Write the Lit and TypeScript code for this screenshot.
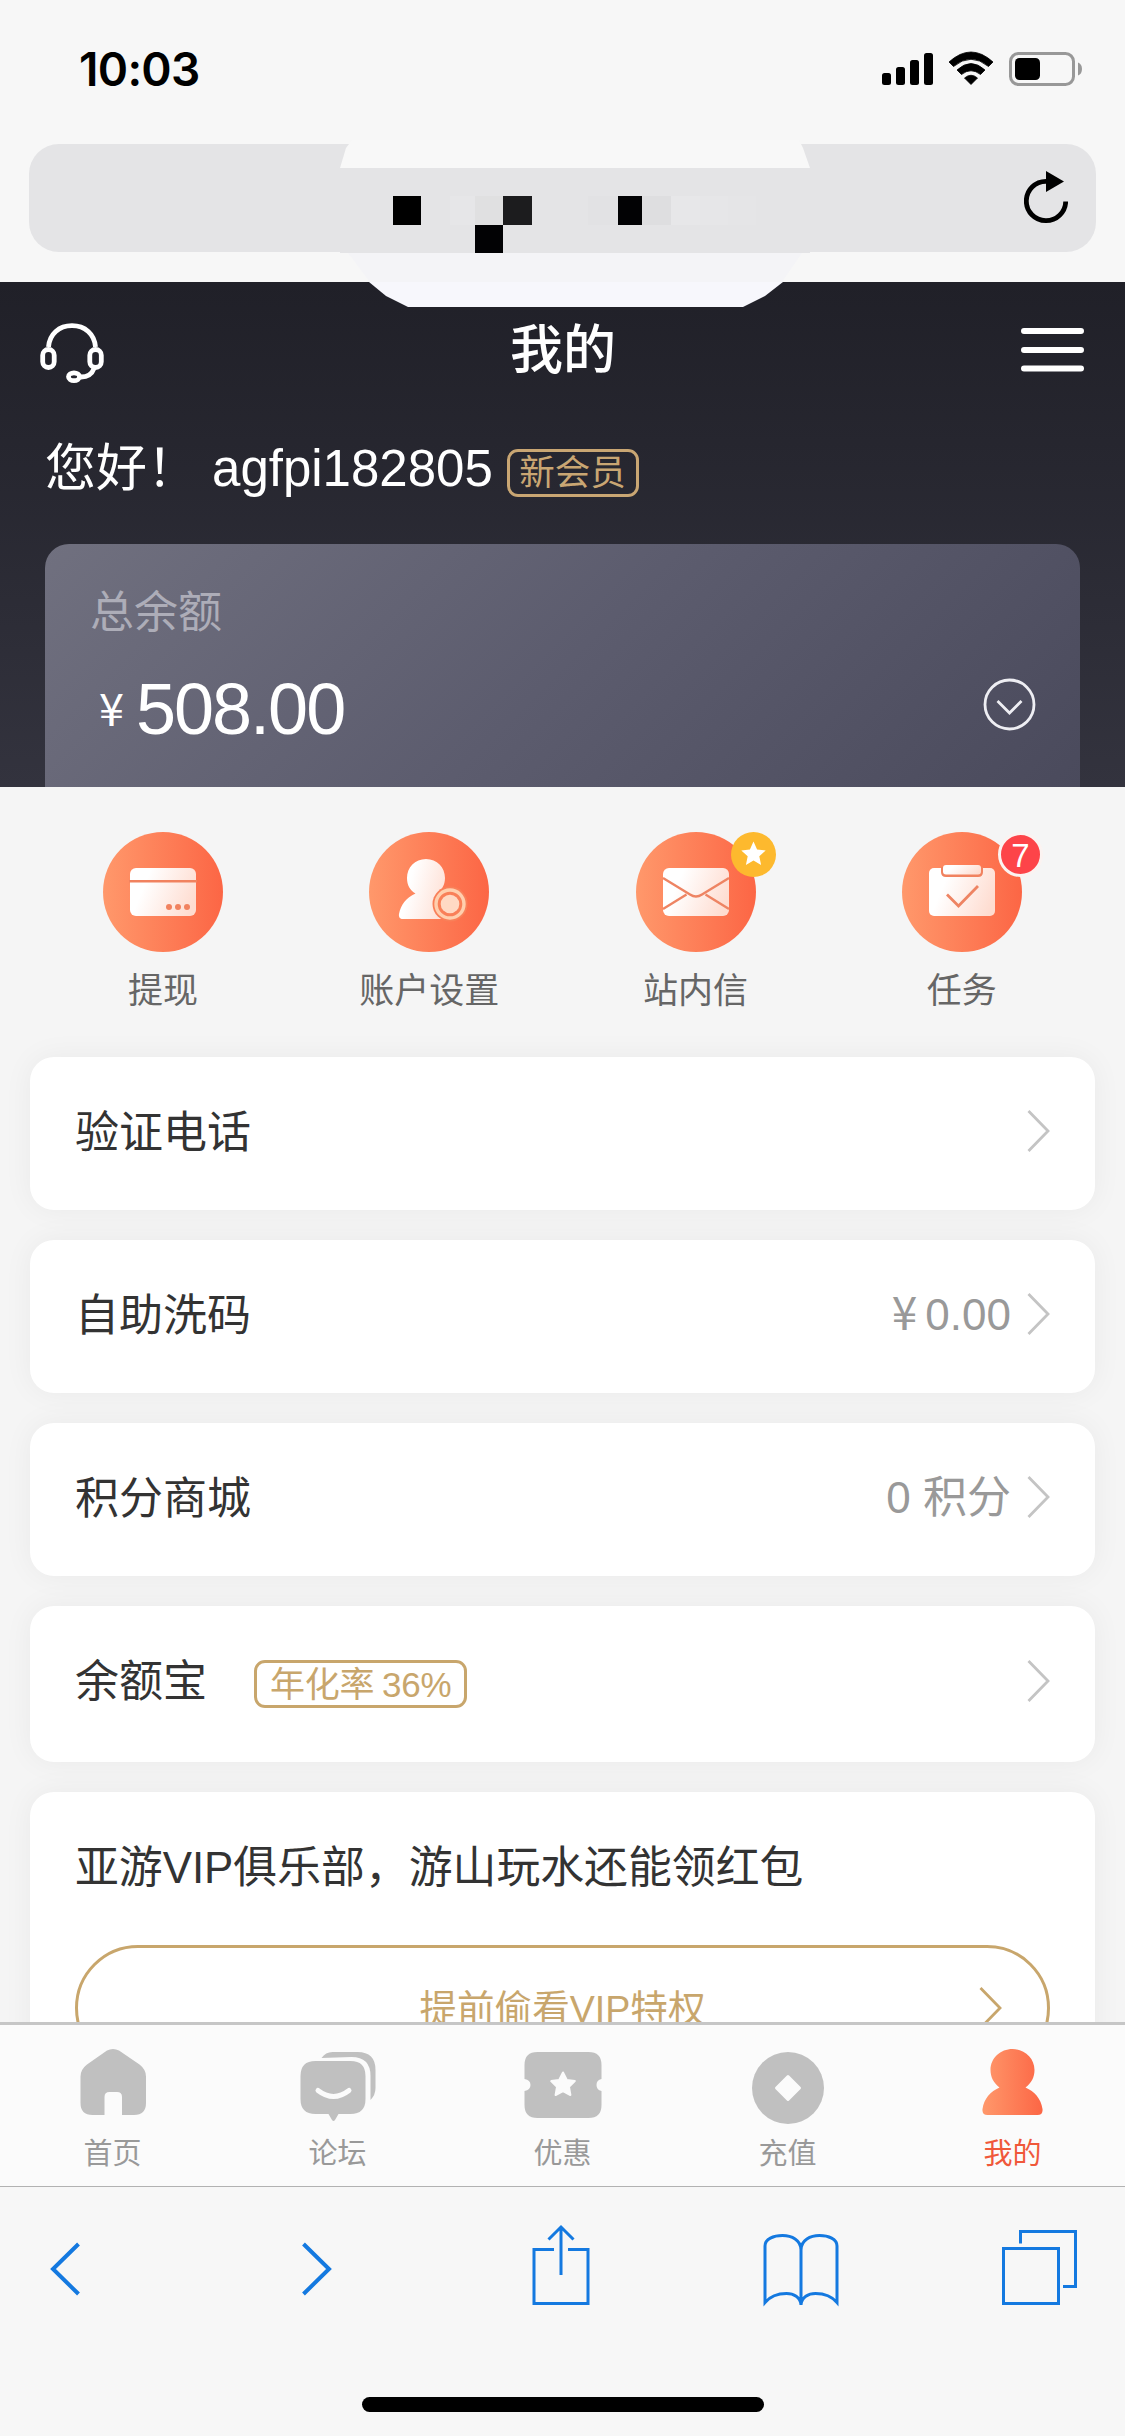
import { LitElement, html, svg, css, nothing } from "lit";
import { customElement, property } from "lit/decorators.js";

const orange = (id: string, x1: number, x2: number) => svg`
  <linearGradient id=${id} gradientUnits="userSpaceOnUse" x1=${x1} y1="0" x2=${x2} y2="0">
    <stop offset="0" stop-color="#ff986b"></stop>
    <stop offset="1" stop-color="#fc6645"></stop>
  </linearGradient>`;

const cream = svg`
  <linearGradient id="cream" x1="0" y1="0.35" x2="1" y2="0.65">
    <stop offset="0.2" stop-color="#ffffff"></stop>
    <stop offset="1" stop-color="#fedcd0"></stop>
  </linearGradient>`;

const actionArt: Record<string, unknown> = {
  withdraw: svg`
    <rect x="27" y="36" width="66" height="48" rx="6" fill="url(#cream)"></rect>
    <path d="M26 49.3H94" stroke="#f1825f" stroke-width="2.6"></path>
    <circle cx="66" cy="75" r="3" fill="#f1825f"></circle>
    <circle cx="75" cy="75" r="3" fill="#f1825f"></circle>
    <circle cx="84" cy="75" r="3" fill="#f1825f"></circle>`,
  account: svg`
    <path fill="url(#cream)" d="M57 27c11 0 19 8.500 19 19 0 7-3.500 12.500-8.500 16L72 66c6 4 9 10 10 16 .5 3-1 5-4 5H34c-3 0-4.500-2-4-5 1.500-9 7-16 16.500-20.500C41 58.500 38 53 38 46c0-10.500 8-19 19-19z"></path>
    <circle cx="81" cy="72" r="17.500" fill="#f98059"></circle>
    <circle cx="81" cy="72" r="14" fill="none" stroke="#ffcfae" stroke-width="3.400"></circle>
    <circle cx="81" cy="72" r="9.300" fill="#ffd9c4"></circle>`,
  mail: svg`
    <rect x="27" y="36" width="66" height="48" rx="6" fill="url(#cream)"></rect>
    <path d="M27 46L54 62.500Q60 66.500 66 62.500L93 46M27 77L50.500 62.500M93 77L69.500 62.500" fill="none" stroke="#ee8463" stroke-width="2.400"></path>`,
  task: svg`
    <rect x="27" y="36" width="66" height="48" rx="5" fill="url(#cream)"></rect>
    <path d="M39 35V40Q39 45 44 45H76Q81 45 81 40V35Z" fill="#f1825f"></path>
    <rect x="41" y="33" width="38" height="9.500" rx="3" fill="url(#cream)"></rect>
    <path d="M45 62.500L56.500 74L76 54" fill="none" stroke="#ee8463" stroke-width="2.800"></path>`,
};

@customElement("action-item")
export class ActionItem extends LitElement {
  @property() icon = "";
  @property() label = "";
  @property() badge = "";

  static styles = css`
    :host { display: flex; flex-direction: column; align-items: center; flex: 1; }
    .disc { position: relative; width: 120px; height: 120px; }
    .disc svg { display: block; }
    .disc .star { position: absolute; left: 95px; top: 0; }
    .count {
      position: absolute; left: 96px; top: 0; box-sizing: border-box;
      width: 45px; height: 45px; border: 3px solid #fbf3f1; border-radius: 50%;
      background: #fd4449; color: #fff; font-size: 33px; line-height: 41px; text-align: center;
    }
    .label { margin-top: 13px; font-size: 35px; line-height: 52px; color: #666; }
  `;

  render() {
    return html`
      <div class="disc">
        <svg width="120" height="120" viewBox="0 0 120 120">
          <defs>${orange("disc", 0, 120)}${cream}</defs>
          <circle cx="60" cy="60" r="60" fill="url(#disc)"></circle>
          ${actionArt[this.icon]}
        </svg>
        ${this.badge === "star"
          ? html`<svg class="star" width="45" height="45" viewBox="0 0 45 45">
              <circle cx="22.500" cy="22.500" r="22.500" fill="#fdb92e"></circle>
              <path fill="#fff" d="M22.500 9.500l3.600 8 8.600.9-6.400 5.900 1.800 8.600-7.600-4.400-7.600 4.400 1.800-8.600-6.400-5.900 8.600-.9z"></path>
            </svg>`
          : this.badge
          ? html`<span class="count">${this.badge}</span>`
          : nothing}
      </div>
      <span class="label">${this.label}</span>
    `;
  }
}

@customElement("menu-row")
export class MenuRow extends LitElement {
  @property() label = "";
  @property() tag = "";
  @property() amount = "";
  @property() value = "";

  static styles = css`
    :host {
      display: flex; align-items: center; box-sizing: border-box; height: 153px;
      padding: 0 45px 5px 45px; border-radius: 24px; background: #fff;
      box-shadow: 0 0 30px rgba(0, 0, 0, 0.05);
    }
    .label { font-size: 44px; line-height: 60px; padding-top: 3px; color: #333; }
    .tag {
      box-sizing: border-box; height: 48px; margin: 6px 0 0 47px; padding: 0 13px;
      border: 3px solid #c8a66c; border-radius: 11px; word-spacing: -2px; letter-spacing: -0.2px;
      font-size: 35px; line-height: 43px; color: #c8a66c;
    }
    .value { margin-left: auto; font-size: 44px; line-height: 60px; padding-top: 2px; color: #999; }
    .yen { font-family: "Noto Sans CJK SC", sans-serif; font-size: 46px; margin-right: 8px; line-height: 1; }
    .arrow { margin-left: 16px; flex: none; }
    .push { margin-left: auto; }
  `;

  render() {
    const side = this.value || this.amount;
    return html`
      <span class="label">${this.label}</span>
      ${this.tag ? html`<span class="tag">${this.tag}</span>` : nothing}
      ${this.amount ? html`<span class="value"><span class="yen">¥</span>${this.amount}</span>` : nothing}
      ${this.value ? html`<span class="value">${this.value}</span>` : nothing}
      <svg class=${side ? "arrow" : "arrow push"} width="23" height="42" viewBox="0 0 23 42">
        <path d="M1.500 1L21 21L1.500 41" fill="none" stroke="#c4c4c4" stroke-width="2.800"></path>
      </svg>
    `;
  }
}

const tabArt: Record<string, unknown> = {
  home: svg`<path fill="#c0c0c0" d="M106.500 2050.500q6-3 12 0l20.500 14q6.500 5 6.500 12v26.500q0 12-12 12h-12v-18q0-5-5-5h-7.500q-5 0-5 5v18h-12q-12 0-12-12v-26.500q0-7 6.500-12z"></path>`,
  forum: svg`
    <path fill="#c0c0c0" d="M321 2058q4-6 11-6h25q18 0 18 18v18q0 7-5 12v-24q0-19-19-19z"></path>
    <path fill="#c0c0c0" d="M315 2061h35q15 0 15 15v23q0 15-15 15h-12l-3.500 6q-1.500 2-3 0l-3.500-6h-13q-15 0-15-15v-23q0-15 15-15z"></path>
    <path d="M317.500 2090.500q15.500 12 31 0" fill="none" stroke="#fbfbfb" stroke-width="5" stroke-linecap="round"></path>`,
  offers: svg`
    <path fill="#c0c0c0" d="M537 2052h51q13 0 13 13v14q-5 1-5 6t5 6v14q0 13-13 13h-51q-13 0-13-13v-14q6-1 6-6t-6-6v-14q0-13 13-13z"></path>
    <path fill="#fbfbfb" stroke="#fbfbfb" stroke-width="2" stroke-linejoin="round" d="M562.500 2072.500l3.800 7.500 8 1.100-5.800 5.700 1.400 8.200-7.400-3.900-7.400 3.900 1.400-8.200-5.800-5.700 8-1.100z"></path>`,
  deposit: svg`
    <circle cx="787.500" cy="2088" r="36" fill="#c0c0c0"></circle>
    <path fill="#fbfbfb" stroke="#fbfbfb" stroke-width="3" stroke-linejoin="round" d="M787.500 2076.500L799 2088L787.500 2099.500L776 2088Z"></path>`,
  me: svg`
    <defs>${orange("me", 982, 1042)}</defs>
    <path fill="url(#me)" d="M1012 2049c12 0 22 9 22 21 0 7-3 13-9 17.500 9 4 15.500 11 17 21.500.500 4-1.500 6-5 6h-50c-3.500 0-5.500-2-5-6 1.500-10.500 8-17.500 17-21.500-6-4.500-9-10.500-9-17.500 0-12 10-21 22-21z"></path>`,
};

interface Tab { icon: string; label: string; box: string; active?: boolean }

const tabs: Tab[] = [
  { icon: "home", label: "首页", box: "72.500 2043 80 84" },
  { icon: "forum", label: "论坛", box: "297.500 2043 80 84" },
  { icon: "offers", label: "优惠", box: "522.500 2043 80 84" },
  { icon: "deposit", label: "充值", box: "747.500 2043 80 84" },
  { icon: "me", label: "我的", box: "972.500 2043 80 84", active: true },
];

/* Mosaic cells covering the address: x, y, width, height, colour. */
const cells: [number, number, number, number, string][] = [
  [393, 196, 28, 29, "#000"],
  [450, 196, 25, 29, "#e6e6e8"],
  [475, 196, 28, 29, "#e0e0e1"],
  [503, 196, 29, 29, "#1c1c1e"],
  [475, 225, 28, 28, "#020204"],
  [588, 196, 30, 29, "#e2e2e4"],
  [618, 196, 24, 29, "#020204"],
  [642, 196, 29, 29, "#dedee0"],
  [671, 196, 29, 29, "#e7e7e9"],
  [700, 196, 28, 29, "#e6e6e8"],
  [728, 196, 28, 29, "#e5e5e7"],
];

@customElement("app-root")
export class AppRoot extends LitElement {
  static styles = css`
    :host {
      display: flex; flex-direction: column; position: relative;
      width: 1125px; height: 2436px; overflow: hidden; background: #f5f5f5;
      font-family: "Liberation Sans", "Noto Sans CJK SC", sans-serif;
    }
    svg { display: block; flex: none; }

    .chrome { height: 282px; background: #f7f7f7; }
    .status {
      display: flex; justify-content: space-between; align-items: center;
      height: 138px; padding: 0 42px 0 79px; margin-bottom: 6px; box-sizing: border-box;
    }
    .time {
      font-family: Inter, "Liberation Sans", sans-serif; font-weight: 600;
      font-size: 46px; line-height: 60px; letter-spacing: -0.7px; color: #000;
    }
    .address {
      display: flex; justify-content: flex-end; align-items: center; box-sizing: border-box;
      height: 108px; margin: 0 29px; padding: 0 28px; border-radius: 30px; background: #e4e4e6;
    }
    .mosaic { position: absolute; left: 330px; top: 140px; }

    .hero {
      box-sizing: border-box; height: 505px; padding: 0 45px;
      background: linear-gradient(180deg, #202028, #33333e);
    }
    .nav {
      display: flex; justify-content: space-between; align-items: center;
      height: 132px; margin: 0 -5px; padding-top: 4px; box-sizing: border-box;
    }
    .headset { margin-top: 6px; }
    .title { font-size: 53px; line-height: 70px; font-weight: 500; color: #fff; padding-top: 1px; }
    .hello { display: flex; align-items: flex-start; height: 130px; box-sizing: border-box; padding-top: 22px; }
    .name { font-size: 51px; line-height: 66px; color: #fff; white-space: pre; }
    .gap { width: 14px; }
    .level {
      box-sizing: border-box; height: 48px; margin: 13px 0 0 14px; padding: 0 10px 0 9.5px;
      border: 3px solid #c9a673; border-radius: 11px;
      font-size: 35.5px; line-height: 42px; color: #c9a673;
    }
    .balance {
      box-sizing: border-box; height: 243px; padding: 36px 44px 0 45px;
      border-radius: 24px 24px 0 0;
      background: linear-gradient(135deg, #70707f 0%, #5c5c6e 50%, #4a4a5c 100%);
    }
    .caption { font-size: 44px; line-height: 66px; color: #adadb8; }
    .sum { display: flex; align-items: center; justify-content: space-between; height: 116px; }
    .money { display: flex; align-items: center; color: #fff; padding: 10px 0 0 9px; }
    .yen { font-family: "Noto Sans CJK SC", sans-serif; font-size: 45px; line-height: 60px; margin-top: -4px; }
    .amount { font-size: 72px; line-height: 90px; letter-spacing: -2px; margin-left: 12px; }

    .content { height: 1235px; overflow: hidden; }
    .actions { display: flex; height: 270px; box-sizing: border-box; padding: 45px 30px 0; }
    .list { display: flex; flex-direction: column; gap: 30px; padding: 0 30px; }
    .tall { height: 156px; padding-bottom: 7px; }
    .vip {
      height: 420px; border-radius: 24px; background: #fff; box-sizing: border-box; padding: 46px 45px 0;
      box-shadow: 0 0 30px rgba(0, 0, 0, 0.05);
    }
    .headline { font-size: 43.85px; line-height: 60px; color: #333; white-space: nowrap; }
    .peek {
      display: grid; grid-template-columns: 1fr auto 1fr; align-items: center; box-sizing: border-box;
      height: 126px; margin-top: 47px; padding: 0 45px;
      border: 3px solid #c8a66c; border-radius: 63px; font-size: 37.6px; line-height: 54px; color: #c8a66c;
    }
    .peek svg { grid-column: 3; justify-self: end; }
    .peek span { grid-column: 2; padding-top: 2px; }

    .tabs {
      display: flex; height: 164px; box-sizing: border-box;
      border-top: 3px solid #c6c6c6; background: #fbfbfb;
    }
    .tab { flex: 1; display: flex; flex-direction: column; align-items: center; padding-top: 18px; }
    .tab span { font-size: 29px; line-height: 40px; margin-top: 7px; color: #999; }
    .tab .on { color: #f0583a; }

    .toolbar {
      flex: 1; display: flex; flex-direction: column; align-items: center;
      box-sizing: border-box; border-top: 1px solid #b2b2b2; background: #f7f7f7;
    }
    .tools {
      display: grid; grid-template-columns: 252px 230.5px 231px 239.5px 77px;
      align-self: stretch; height: 84px; margin-top: 36px; padding-left: 48px;
    }
    .pill { width: 402px; height: 15px; margin-top: 90px; border-radius: 8px; background: #000; }
  `;

  render() {
    return html`
      <header class="chrome">
        <div class="status">
          <span class="time">10:03</span>
          <svg width="202" height="36" viewBox="881 51 202 36">
            <rect x="882" y="73" width="9" height="12" rx="2.500"></rect>
            <rect x="896" y="67" width="9" height="18" rx="2.500"></rect>
            <rect x="910" y="60" width="9" height="25" rx="2.500"></rect>
            <rect x="924" y="53" width="9" height="32" rx="2.500"></rect>
            <path stroke="#000" stroke-width="0.800" stroke-linejoin="round" d="M949 62Q971 42 993 62L988.500 66.500Q971 52 953.500 66.500ZM957 70Q971 57 985 70L980.500 74.500Q971 67 961.500 74.500ZM964.500 78Q971 72.500 977.500 78L971 84.500Z"></path>
            <rect x="1010.500" y="53.500" width="63" height="31" rx="8" fill="none" stroke="#989898" stroke-width="3"></rect>
            <rect x="1015" y="58" width="25" height="22" rx="4.500"></rect>
            <path d="M1078 62.500Q1082 64 1082 69T1078 75.500Z" fill="#989898"></path>
          </svg>
        </div>
        <div class="address">
          <svg width="44" height="54" viewBox="1024 172 44 54">
            <path d="M1046 182.300A19.700 19.700 0 1 0 1065.700 202.500" fill="none" stroke="#000" stroke-width="4.800"></path>
            <path d="M1046 172L1064 182.500L1046 193Z"></path>
          </svg>
        </div>
      </header>

      <section class="hero">
        <div class="nav">
          <svg class="headset" width="65" height="62" viewBox="40 322 65 62" fill="none" stroke="#fff" stroke-width="4.800">
            <path d="M48.500 347C49.500 334 59 325.700 72 325.700S94.500 334 95.500 347"></path>
            <rect x="42.700" y="349.500" width="11.500" height="18" rx="5.700"></rect>
            <rect x="89.800" y="349.500" width="11.500" height="18" rx="5.700"></rect>
            <path d="M94 368.500C92 374 88 377 81 377"></path>
            <ellipse cx="74" cy="376.700" rx="5.500" ry="3.900"></ellipse>
          </svg>
          <span class="title">我的</span>
          <svg width="64" height="46" viewBox="1021 327 64 46" stroke="#fff" stroke-width="6" stroke-linecap="round">
            <path d="M1024 331H1081M1024 350H1081M1024 368.500H1081"></path>
          </svg>
        </div>
        <div class="hello">
          <span class="name">您好！</span><span class="gap"></span>
          <span class="name">agfpi182805</span>
          <span class="level">新会员</span>
        </div>
        <div class="balance">
          <div class="caption">总余额</div>
          <div class="sum">
            <div class="money"><span class="yen">¥</span><span class="amount">508.00</span></div>
            <svg width="53" height="53" viewBox="983 678 53 53" fill="none" stroke="#eeeef3" stroke-width="2.800">
              <circle cx="1009.500" cy="704.500" r="24.500"></circle>
              <path d="M997.500 701L1009.500 713L1021.500 701"></path>
            </svg>
          </div>
        </div>
      </section>

      <main class="content">
        <div class="actions">
          <action-item icon="withdraw" label="提现"></action-item>
          <action-item icon="account" label="账户设置"></action-item>
          <action-item icon="mail" label="站内信" badge="star"></action-item>
          <action-item icon="task" label="任务" badge="7"></action-item>
        </div>
        <div class="list">
          <menu-row label="验证电话"></menu-row>
          <menu-row label="自助洗码" amount="0.00"></menu-row>
          <menu-row label="积分商城" value="0 积分"></menu-row>
          <menu-row class="tall" label="余额宝" tag="年化率 36%"></menu-row>
          <div class="vip">
            <div class="headline">亚游VIP俱乐部，游山玩水还能领红包</div>
            <div class="peek">
              <span>提前偷看VIP特权</span>
              <svg width="23" height="42" viewBox="0 0 23 42">
                <path d="M1.500 1L21 21L1.500 41" fill="none" stroke="#c8a66c" stroke-width="2.800"></path>
              </svg>
            </div>
          </div>
        </div>
      </main>

      <nav class="tabs">
        ${tabs.map(
          (t) => html`<div class="tab">
            <svg width="80" height="84" viewBox=${t.box}>${tabArt[t.icon]}</svg>
            <span class=${t.active ? "on" : ""}>${t.label}</span>
          </div>`
        )}
      </nav>

      <footer class="toolbar">
        <div class="tools">
          <svg width="34" height="84" viewBox="48 2223 34 84" fill="none" stroke="#1479e0" stroke-width="4">
            <path d="M78.500 2244L53 2269L78.500 2294"></path>
          </svg>
          <svg width="34" height="84" viewBox="300 2223 34 84" fill="none" stroke="#1479e0" stroke-width="4">
            <path d="M303.500 2244L329 2269L303.500 2294"></path>
          </svg>
          <svg width="60" height="84" viewBox="530.500 2223 60 84" fill="none" stroke="#1479e0" stroke-width="3">
            <path d="M553.500 2249.500H533.500V2303.500H587.500V2249.500H567.500M560.500 2275V2227M548 2239.500L560.500 2227L573 2239.500"></path>
          </svg>
          <svg width="78" height="84" viewBox="761.500 2223 78 84" fill="none" stroke="#1479e0" stroke-width="3">
            <path d="M800.500 2305C800 2297 793 2293.500 786 2293.500C778 2293.500 770 2296 764.500 2302.500V2246C764.500 2239 773 2235.500 782 2235.500S800.500 2240 800.500 2250V2305C801 2297 808 2293.500 815 2293.500C823 2293.500 831 2296 836.500 2302.500V2246C836.500 2239 828 2235.500 819 2235.500S800.500 2240 800.500 2250"></path>
          </svg>
          <svg width="77" height="84" viewBox="1001 2223 77 84" fill="none" stroke="#1479e0" stroke-width="3">
            <path d="M1003.500 2248.500H1058.500V2303.500H1003.500ZM1020.500 2243.500V2231.500H1075.500V2286.500H1063"></path>
          </svg>
        </div>
        <div class="pill"></div>
      </footer>

      <svg class="mosaic" width="490" height="170" viewBox="330 140 490 170">
        <path fill="#f8f8f8" d="M352 140H799L803 148L810 168H340L346 148Z"></path>
        <rect x="340" y="168" width="470" height="85" fill="#e4e4e6"></rect>
        <path fill="#f4f4f7" d="M348 253H802L782 282H370Z"></path>
        <path fill="#f7f7fc" d="M369 282H783L765 296L743 307H408L386 296Z"></path>
        ${cells.map(([x, y, w, h, c]) => svg`<rect x=${x} y=${y} width=${w} height=${h} fill=${c}></rect>`)}
      </svg>
    `;
  }
}
